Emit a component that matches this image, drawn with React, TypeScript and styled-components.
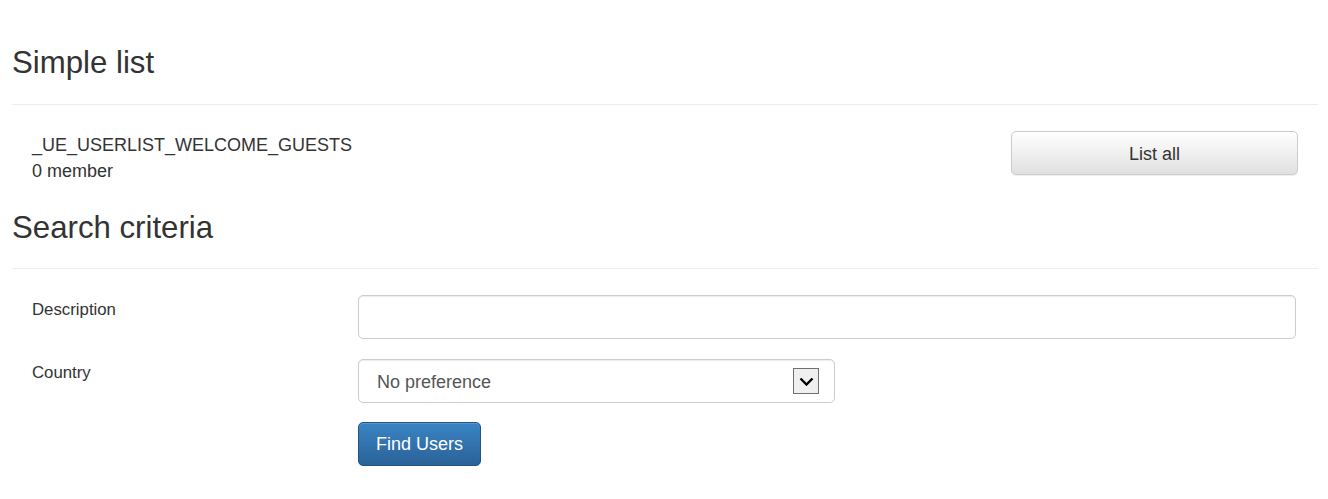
import React from "react";
import styled, { createGlobalStyle } from "styled-components";

const GlobalStyle = createGlobalStyle`
  html, body {
    margin: 0;
    padding: 0;
    background: #ffffff;
  }
  body {
    font-family: "Liberation Sans", Arial, Helvetica, sans-serif;
    color: #333333;
  }
  * { box-sizing: border-box; }
`;

const Page = styled.div`
  padding: 0 10px 0 12px;
`;

const PageHeader = styled.div<{ $top: number; $bottom: number }>`
  margin-top: ${(p) => p.$top}px;
  padding-bottom: ${(p) => p.$bottom}px;
  border-bottom: 1px solid #eeeeee;
`;

const Title = styled.h2`
  margin: 0;
  font-size: 31.2px;
  line-height: 34px;
  font-weight: 400;
  color: #333333;
`;

const ListRow = styled.div`
  margin-top: 26px;
  padding: 0 20px 0 20px;
  display: flex;
  justify-content: space-between;
  align-items: flex-start;
`;

const ListInfo = styled.div`
  padding-top: 2px;
  font-size: 18px;
  line-height: 25.7px;
  color: #333333;
`;

const DefaultButton = styled.button`
  width: 287px;
  height: 44px;
  border: 1px solid #cccccc;
  border-radius: 5px;
  background: linear-gradient(to bottom, #ffffff 0%, #e0e0e0 100%);
  box-shadow: inset 0 1px 0 rgba(255, 255, 255, 0.15), 0 1px 1px rgba(0, 0, 0, 0.075);
  font-family: inherit;
  font-size: 18px;
  line-height: 1;
  padding: 2px 0 0 0;
  color: #333333;
  cursor: pointer;
`;

const Form = styled.form`
  margin-top: 26px;
  padding: 0 22px 0 20px;
  display: grid;
  grid-template-columns: 326px 1fr;
  row-gap: 20px;
  align-items: start;
`;

const Label = styled.label<{ $offset: number }>`
  padding-top: ${(p) => p.$offset}px;
  font-size: 16.8px;
  line-height: 24px;
  color: #333333;
`;

const TextInput = styled.input`
  display: block;
  width: 100%;
  height: 44px;
  border: 1px solid #cccccc;
  border-radius: 5px;
  box-shadow: inset 0 1px 1px rgba(0, 0, 0, 0.075);
  padding: 0 18px;
  font-family: inherit;
  font-size: 18px;
  color: #555555;
  outline: none;
`;

const SelectShell = styled.div`
  width: 477px;
  height: 44px;
  border: 1px solid #cccccc;
  border-radius: 5px;
  box-shadow: inset 0 1px 1px rgba(0, 0, 0, 0.075);
  display: flex;
  align-items: center;
  padding: 0 15px 0 0;
  background: #ffffff;
`;

const Select = styled.select`
  flex: 1;
  height: 100%;
  appearance: none;
  -webkit-appearance: none;
  border: none;
  background: transparent;
  padding: 1px 0 0 18px;
  font-family: inherit;
  font-size: 18px;
  color: #555555;
  outline: none;
`;

const ArrowBox = styled.span`
  width: 26px;
  height: 26px;
  border: 1px solid #707070;
  background: #efefef;
  display: flex;
  align-items: center;
  justify-content: center;
  flex: none;
`;

const PrimaryButton = styled.button`
  grid-column: 2;
  justify-self: start;
  margin-top: -1px;
  height: 44px;
  padding: 0 17px;
  border: 1px solid #245580;
  border-radius: 5px;
  background: linear-gradient(to bottom, #3a84c4 0%, #2a6298 100%);
  box-shadow: inset 0 1px 0 rgba(255, 255, 255, 0.15), 0 1px 1px rgba(0, 0, 0, 0.075);
  font-family: inherit;
  font-size: 18px;
  color: #ffffff;
  cursor: pointer;
`;

export default function App() {
  return (
    <>
      <GlobalStyle />
      <Page>
        <PageHeader $top={46} $bottom={24}>
          <Title>Simple list</Title>
        </PageHeader>
        <ListRow>
          <ListInfo>
            _UE_USERLIST_WELCOME_GUESTS
            <br />0 member
          </ListInfo>
          <DefaultButton type="button">List all</DefaultButton>
        </ListRow>
        <PageHeader $top={27} $bottom={23}>
          <Title>Search criteria</Title>
        </PageHeader>
        <Form onSubmit={(e) => e.preventDefault()}>
          <Label htmlFor="desc" $offset={3}>Description</Label>
          <TextInput id="desc" type="text" />
          <Label htmlFor="country" $offset={2}>Country</Label>
          <SelectShell>
            <Select id="country" defaultValue="">
              <option value="">No preference</option>
            </Select>
            <ArrowBox>
              <svg width="15" height="9" viewBox="0 0 15 9">
                <path d="M1.5 1.5 L7.5 7.5 L13.5 1.5" fill="none" stroke="#000" strokeWidth="2.4" />
              </svg>
            </ArrowBox>
          </SelectShell>
          <PrimaryButton type="submit">Find Users</PrimaryButton>
        </Form>
      </Page>
    </>
  );
}
